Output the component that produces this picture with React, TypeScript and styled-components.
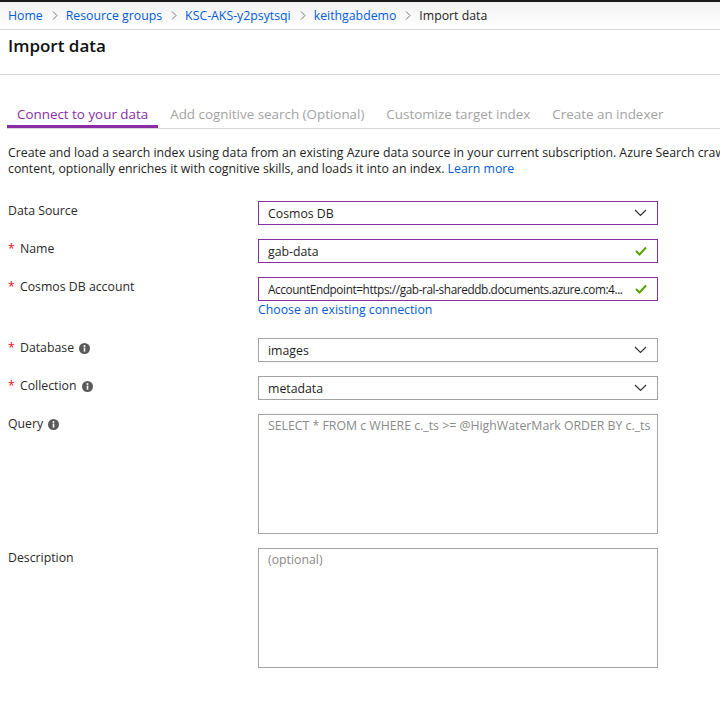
import React from "react";
import styled, { createGlobalStyle } from "styled-components";

const GlobalStyle = createGlobalStyle`
  *, *::before, *::after {
    box-sizing: border-box;
  }
  body {
    margin: 0;
    background: #fff;
    font-family: "Open Sans", "Noto Sans", sans-serif;
    color: #1e1e1e;
  }
`;

const Page = styled.div`
  width: 720px;
  height: 726px;
  overflow: hidden;
  border-top: 2px solid #1b1b1b;
`;

const Breadcrumb = styled.nav`
  display: flex;
  align-items: center;
  height: 28px;
  padding-left: 8px;
  background: linear-gradient(#f2f2f2, #ffffff);
  border-bottom: 1px solid #d6d6d6;
  font-size: 12.3px;
  white-space: nowrap;
`;

const Crumb = styled.a<{ $current?: boolean }>`
  color: ${(p) => (p.$current ? "#1e1e1e" : "#015cda")};
  text-decoration: none;
`;

const Chevron = styled.span`
  display: inline-flex;
  margin: 0 8px 0 9px;
`;

const TitleBar = styled.div`
  height: 45px;
  padding: 4px 8px 0;
  border-bottom: 1px solid #d6d6d6;
  > h1 {
    margin: 0;
    font-size: 17px;
    line-height: 23px;
    font-weight: 600;
    color: #111;
  }
`;

const Body = styled.div`
  padding-left: 7px;
`;

const Tabs = styled.div`
  display: flex;
  gap: 2px;
  margin-top: 30px;
  border-bottom: 1px solid #d6d6d6;
`;

const Tab = styled.div<{ $active?: boolean }>`
  padding: 0 10px 2px;
  font-size: 13.4px;
  line-height: 18px;
  color: ${(p) => (p.$active ? "#8a2da5" : "#a3a3a3")};
  border-bottom: 3px solid ${(p) => (p.$active ? "#8a2da5" : "transparent")};
  white-space: nowrap;
`;

const Intro = styled.p`
  margin: 16px 0 0 1px;
  font-size: 12.3px;
  line-height: 16px;
  white-space: nowrap;
  color: #1e1e1e;
  a {
    color: #015cda;
    text-decoration: none;
  }
`;

const Form = styled.div`
  display: flex;
  flex-direction: column;
  margin-top: 24px;
  gap: 14px;
`;

const Row = styled.div`
  display: grid;
  grid-template-columns: 251px 400px;
  align-items: start;
`;

const Label = styled.div`
  display: flex;
  align-items: center;
  gap: 5px;
  padding-top: 2px;
  padding-left: 1px;
  font-size: 12.3px;
  line-height: 16px;
  color: #2a2a2a;
`;

const Star = styled.span`
  color: #e0101e;
  margin-right: 2px;
`;

const Field = styled.div<{ $focused?: boolean; $dense?: boolean }>`
  display: flex;
  align-items: center;
  justify-content: space-between;
  gap: 8px;
  height: 24px;
  padding: 0 10px 0 9px;
  border: 1px solid ${(p) => (p.$focused ? "#8a2da5" : "#a3a3a3")};
  font-size: ${(p) => (p.$dense ? "11.8px" : "12.3px")};
  letter-spacing: ${(p) => (p.$dense ? "-0.4px" : "normal")};
  color: #1e1e1e;
  white-space: nowrap;
  > span {
    overflow: hidden;
    text-overflow: ellipsis;
  }
  > svg {
    flex-shrink: 0;
  }
`;

const Area = styled.div`
  height: 120px;
  padding: 3px 9px;
  border: 1px solid #a3a3a3;
  font-size: 12.3px;
  line-height: 16px;
  color: #8a8a8a;
  white-space: nowrap;
`;

const LinkText = styled.a`
  display: block;
  margin-top: 1px;
  padding-bottom: 6px;
  font-size: 12.3px;
  line-height: 16px;
  color: #015cda;
  text-decoration: none;
`;

const ChevronRight = () => (
  <svg width="6" height="9" viewBox="0 0 6 9">
    <path d="M1 0.5 L5 4.5 L1 8.5" fill="none" stroke="#777" strokeWidth="1" />
  </svg>
);

const Caret = () => (
  <svg width="13" height="8" viewBox="0 0 13 8">
    <path d="M1 1 L6.5 6.5 L12 1" fill="none" stroke="#333" strokeWidth="1.2" />
  </svg>
);

const Check = () => (
  <svg width="12" height="10" viewBox="0 0 12 10">
    <path d="M1 5 L4.5 8.5 L11 1.5" fill="none" stroke="#57a300" strokeWidth="2" />
  </svg>
);

const Info = () => (
  <svg width="11" height="11" viewBox="0 0 11 11">
    <circle cx="5.5" cy="5.5" r="5.5" fill="#5a5a5a" />
    <circle cx="5.5" cy="3" r="1" fill="#fff" />
    <rect x="4.7" y="4.6" width="1.6" height="4" fill="#fff" />
  </svg>
);

const crumbs = ["Home", "Resource groups", "KSC-AKS-y2psytsqi", "keithgabdemo"];
const tabs = [
  "Connect to your data",
  "Add cognitive search (Optional)",
  "Customize target index",
  "Create an indexer",
];

const App = () => {
  return (
    <Page>
      <GlobalStyle />
      <Breadcrumb>
        {crumbs.map((c) => (
          <React.Fragment key={c}>
            <Crumb href="#">{c}</Crumb>
            <Chevron>
              <ChevronRight />
            </Chevron>
          </React.Fragment>
        ))}
        <Crumb $current>Import data</Crumb>
      </Breadcrumb>
      <TitleBar>
        <h1>Import data</h1>
      </TitleBar>
      <Body>
        <Tabs>
          {tabs.map((t, i) => (
            <Tab key={t} $active={i === 0}>
              {t}
            </Tab>
          ))}
        </Tabs>
        <Intro>
          Create and load a search index using data from an existing Azure data source in your current subscription. Azure Search crawls
          <br />
          content, optionally enriches it with cognitive skills, and loads it into an index. <a href="#">Learn more</a>
        </Intro>
        <Form>
          <Row>
            <Label>Data Source</Label>
            <Field $focused>
              <span>Cosmos DB</span>
              <Caret />
            </Field>
          </Row>
          <Row>
            <Label>
              <span>
                <Star>*</Star> Name
              </span>
            </Label>
            <Field $focused>
              <span>gab-data</span>
              <Check />
            </Field>
          </Row>
          <Row>
            <Label>
              <span>
                <Star>*</Star> Cosmos DB account
              </span>
            </Label>
            <div>
              <Field $focused $dense>
                <span>AccountEndpoint=https://gab-ral-shareddb.documents.azure.com:4...</span>
                <Check />
              </Field>
              <LinkText href="#">Choose an existing connection</LinkText>
            </div>
          </Row>
          <Row>
            <Label>
              <span>
                <Star>*</Star> Database
              </span>
              <Info />
            </Label>
            <Field>
              <span>images</span>
              <Caret />
            </Field>
          </Row>
          <Row>
            <Label>
              <span>
                <Star>*</Star> Collection
              </span>
              <Info />
            </Label>
            <Field>
              <span>metadata</span>
              <Caret />
            </Field>
          </Row>
          <Row>
            <Label>
              <span>Query</span>
              <Info />
            </Label>
            <Area>SELECT * FROM c WHERE c._ts &gt;= @HighWaterMark ORDER BY c._ts</Area>
          </Row>
          <Row>
            <Label>Description</Label>
            <Area>(optional)</Area>
          </Row>
        </Form>
      </Body>
    </Page>
  );
};

export default App;
